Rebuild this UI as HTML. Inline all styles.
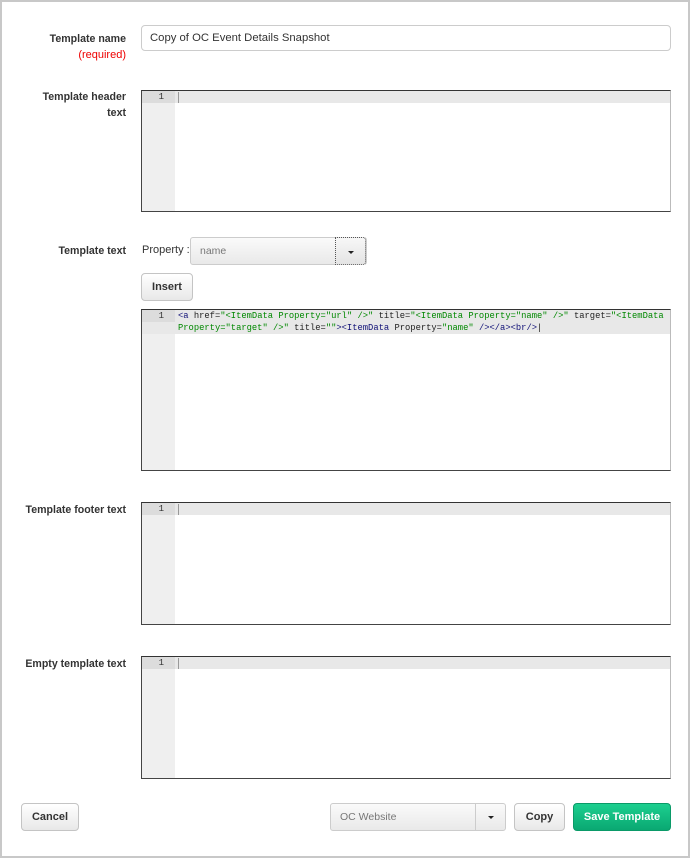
<!DOCTYPE html>
<html><head><style>
*{box-sizing:border-box;margin:0;padding:0}
body{width:690px;height:858px;background:#fff;font-family:"Liberation Sans",sans-serif;font-size:11.3px;color:#333;position:relative;overflow:hidden}
.frame{position:absolute;left:0;top:0;width:690px;height:858px;border:2px solid #c8c8c8}
.lbl{position:absolute;right:564px;text-align:right;font-weight:bold;font-size:10.6px;line-height:16px;color:#333}
.req{color:#e00;font-weight:normal;font-size:11px}
.inp{position:absolute;left:141px;top:25px;width:530px;height:26px;border:1px solid #ccc;border-radius:4px;padding:5px 8px;font-size:11.3px;line-height:14px;color:#333}
.ed{position:absolute;left:141px;width:530px;border:1px solid #444;border-top:1px solid #333;border-right-color:#bbb;background:#fff;overflow:hidden}
.gut{position:absolute;left:0;top:0;bottom:0;width:33px;background:#efefef}
.ln{position:absolute;left:0;top:0;right:0;height:12px;background:#e8e8e8}
.ln.two{height:24px}
.num{position:absolute;left:0;top:0;width:33px;height:12px;background:#dcdcdc;font-family:"Liberation Mono",monospace;font-size:9px;line-height:13px;text-align:right;padding-right:11px;color:#333}
.cur{position:absolute;left:36px;top:1px;width:1px;height:11px;background:#999}
.code{position:absolute;left:36px;top:0;font-family:"Liberation Mono",monospace;font-size:8.8px;line-height:12px;white-space:pre;color:#222}
.t{color:#117}.s{color:#080}
.btn{position:absolute;height:27px;border:1px solid #c4c4c4;border-radius:4px;background:linear-gradient(#fff,#e8e8e8);font-weight:bold;font-size:11px;line-height:25px;text-align:center;color:#333}
.sel{position:absolute;border:1px solid #ccc;border-radius:3px;background:linear-gradient(#fafafa,#e9e9e9);font-size:10.5px;color:#777;padding-left:9px}
.caret{position:absolute;width:0;height:0;border-left:3px solid transparent;border-right:3px solid transparent;border-top:3px solid #222}
</style></head><body>
<div class="frame"></div>

<div class="lbl" style="top:31px">Template name<br><span class="req">(required)</span></div>
<div class="inp">Copy of OC Event Details Snapshot</div>

<div class="lbl" style="top:89px">Template header<br>text</div>
<div class="ed" style="top:90px;height:122px"><div class="gut"></div><div class="ln"></div><div class="num">1</div><div class="cur"></div></div>

<div class="lbl" style="top:243px">Template text</div>
<div style="position:absolute;left:142px;top:244px;font-size:11px">Property :</div>
<div class="sel" style="left:190px;top:237px;width:177px;height:28px;line-height:26px">name
<div style="position:absolute;right:0;top:-1px;width:31px;height:28px;border:1px dotted #555;border-radius:0 3px 3px 0;background:linear-gradient(#f7f7f7,#e4e4e4)"><div class="caret" style="left:12px;top:13px"></div></div></div>
<div class="btn" style="left:141px;top:273px;width:52px;height:28px;line-height:26px">Insert</div>
<div class="ed" style="top:309px;height:162px"><div class="gut"></div><div class="ln two"></div><div class="num">1</div>
<div class="code"><span class="t">&lt;a</span> href=<span class="s">"&lt;ItemData Property="url" /&gt;"</span> title=<span class="s">"&lt;ItemData Property="name" /&gt;"</span> target=<span class="s">"&lt;ItemData</span>
<span class="s">Property="target" /&gt;"</span> title=<span class="s">""</span><span class="t">&gt;&lt;ItemData</span> Property=<span class="s">"name"</span> <span class="t">/&gt;&lt;/a&gt;&lt;br/&gt;</span>|</div></div>

<div class="lbl" style="top:502px">Template footer text</div>
<div class="ed" style="top:502px;height:123px"><div class="gut"></div><div class="ln"></div><div class="num">1</div><div class="cur"></div></div>

<div class="lbl" style="top:656px">Empty template text</div>
<div class="ed" style="top:656px;height:123px"><div class="gut"></div><div class="ln"></div><div class="num">1</div><div class="cur"></div></div>

<div class="btn" style="left:21px;top:803px;width:58px;height:28px;line-height:26px">Cancel</div>
<div class="sel" style="left:330px;top:803px;width:176px;height:28px;line-height:26px">OC Website
<div style="position:absolute;right:0;top:0;width:30px;height:26px;border-left:1px solid #ccc"><div class="caret" style="left:12px;top:12px"></div></div></div>
<div class="btn" style="left:514px;top:803px;width:51px;height:28px;line-height:26px">Copy</div>
<div class="btn" style="left:573px;top:803px;width:98px;height:28px;line-height:26px;border-color:#0a9a68;background:linear-gradient(#1ccf8f,#0aa872);color:#fff">Save Template</div>
</body></html>
